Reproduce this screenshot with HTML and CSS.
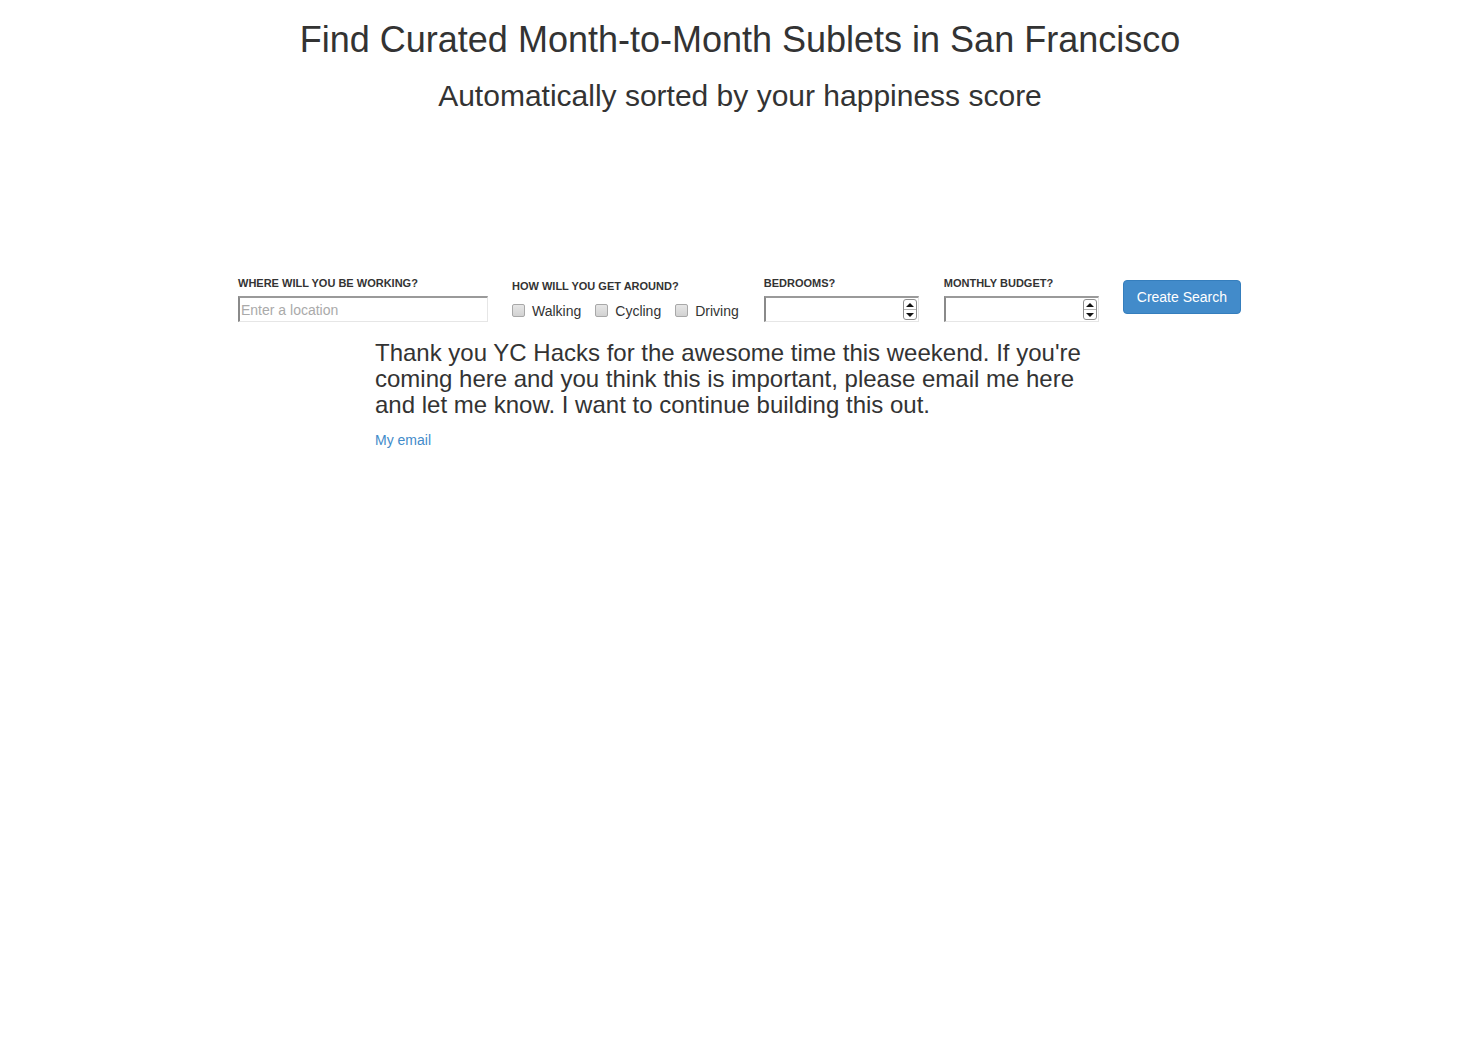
FILE: index.html
```html
<!DOCTYPE html>
<html lang="en">
<head>
<meta charset="utf-8">
<title>Curated Month-to-Month Sublets</title>
<link rel="stylesheet" href="styles.css">
</head>
<body>
<header class="hero">
  <h1 class="hero-title">Find Curated Month-to-Month Sublets in San Francisco</h1>
  <h2 class="hero-sub">Automatically sorted by your happiness score</h2>
</header>

<form class="search">
  <div class="field field-location">
    <label class="field-label">Where will you be working?</label>
    <div class="inset"><input class="inset-input" type="text" placeholder="Enter a location"></div>
  </div>

  <div class="field field-transit">
    <label class="field-label field-label-low">How will you get around?</label>
    <div class="checks">
      <label class="check"><input class="check-box" type="checkbox"> Walking</label>
      <label class="check"><input class="check-box" type="checkbox"> Cycling</label>
      <label class="check"><input class="check-box" type="checkbox"> Driving</label>
    </div>
  </div>

  <div class="field field-num">
    <label class="field-label">Bedrooms?</label>
    <div class="inset">
      <input class="inset-input" type="text">
      <span class="spin"><span class="spin-up"></span><span class="spin-down"></span></span>
    </div>
  </div>

  <div class="field field-num">
    <label class="field-label">Monthly budget?</label>
    <div class="inset">
      <input class="inset-input" type="text">
      <span class="spin"><span class="spin-up"></span><span class="spin-down"></span></span>
    </div>
  </div>

  <button class="btn" type="button">Create Search</button>
</form>

<section class="note">
  <p class="note-text">Thank you YC Hacks for the awesome time this weekend. If you're coming here and you think this is important, please email me here and let me know. I want to continue building this out.</p>
  <a class="note-link" href="#">My email</a>
</section>
</body>
</html>
```

FILE: styles.css
```css
html, body {
  margin: 0;
  padding: 0;
  background: #fff;
  color: #333;
  font-family: "Liberation Sans", Arial, sans-serif;
  font-size: 14px;
  line-height: 1.43;
}

.hero {
  text-align: center;
  padding-top: 18px;
}

.hero-title {
  margin: 0;
  font-size: 36px;
  font-weight: normal;
  line-height: 44px;
}

.hero-sub {
  margin: 16px 0 0;
  font-size: 30px;
  font-weight: normal;
  line-height: 36px;
}

.search {
  width: 1004px;
  margin: 162px auto 0;
  display: flex;
  align-items: flex-start;
  gap: 24px;
}

.field {
  display: flex;
  flex-direction: column;
  flex-shrink: 0;
}

.field-label {
  font-size: 11px;
  font-weight: bold;
  text-transform: uppercase;
  line-height: 14px;
  height: 14px;
  margin-bottom: 6px;
  color: #333;
  white-space: nowrap;
}

.field-label-low {
  margin-top: 3px;
  margin-bottom: 5px;
}

.field-transit { margin-right: 1px; }
.field-location .inset { width: 250px; }
.field-num .inset { width: 155px; }
.field-num + .field-num { margin-left: 1px; }

.inset {
  box-sizing: border-box;
  height: 26px;
  display: flex;
  align-items: center;
  border-style: solid;
  border-width: 2px 1px 1px 2px;
  border-color: #9a9a9a #e6e6e6 #e6e6e6 #8a8a8a;
  background: #fff;
}

.inset-input {
  flex: 1;
  min-width: 0;
  border: 0;
  outline: none;
  padding: 0 1px;
  font: 14px "Liberation Sans", Arial, sans-serif;
  color: #333;
  background: transparent;
}

.inset-input::placeholder {
  color: #aaa;
}

.spin {
  box-sizing: border-box;
  width: 14px;
  height: 21px;
  margin-right: 1px;
  border: 1px solid #8f8f8f;
  border-radius: 3px;
  display: flex;
  flex-direction: column;
  background: #fff;
}

.spin-up, .spin-down {
  flex: 1;
  display: flex;
  align-items: center;
  justify-content: center;
}

.spin-up {
  border-bottom: 1px solid #b5b5b5;
}

.spin-up::before {
  content: "";
  border-left: 4px solid transparent;
  border-right: 4px solid transparent;
  border-bottom: 4px solid #111;
}

.spin-down::before {
  content: "";
  border-left: 4px solid transparent;
  border-right: 4px solid transparent;
  border-top: 4px solid #111;
}

.checks {
  display: flex;
  gap: 14px;
  height: 22px;
  padding-top: 2px;
  align-items: center;
}

.check {
  display: flex;
  align-items: center;
  gap: 7px;
  font-size: 14px;
  color: #333;
  white-space: nowrap;
}

.check-box {
  appearance: none;
  -webkit-appearance: none;
  margin: 0;
  width: 13px;
  height: 13px;
  box-sizing: border-box;
  border: 1px solid #a8a8a8;
  border-radius: 2px;
  background: linear-gradient(#e6e6e6, #d2d2d2);
}

.btn {
  flex-shrink: 0;
  white-space: nowrap;
  margin-top: 4px;
  height: 34px;
  padding: 0 13px;
  border: 1px solid #357ebd;
  border-radius: 4px;
  background: #428bca;
  color: #fff;
  font: 14px "Liberation Sans", Arial, sans-serif;
  cursor: pointer;
}

.note {
  width: 730px;
  margin: 18px auto 0;
}

.note-text {
  margin: 0 0 12px;
  font-size: 24px;
  line-height: 26px;
  color: #333;
}

.note-link {
  font-size: 14px;
  color: #428bca;
  text-decoration: none;
}
```
